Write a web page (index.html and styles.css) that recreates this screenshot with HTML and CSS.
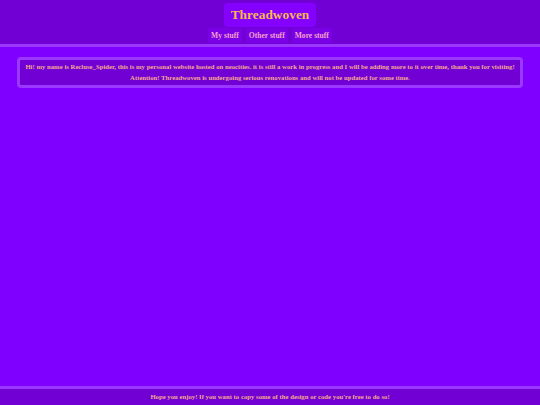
FILE: index.html
```html
<!DOCTYPE html>
<html>
<head>
<meta charset="utf-8">
<link rel="stylesheet" href="styles.css">
</head>
<body>
<header class="site-header">
  <div class="title">Threadwoven</div>
  <nav class="nav">
    <a class="nav-link" href="#">My stuff</a>
    <a class="nav-link" href="#">Other stuff</a>
    <a class="nav-link" href="#">More stuff</a>
  </nav>
</header>
<main class="main">
  <div class="notice">
    <p>Hi! my name is Recluse_Spider, this is my personal website hosted on neocities. it is still a work in progress and I will be adding more to it over time, thank you for visiting!</p>
    <p>Attention! Threadwoven is undergoing serious renovations and will not be updated for some time.</p>
  </div>
</main>
<footer class="site-footer">Hope you enjoy! If you want to copy some of the design or code you're free to do so!</footer>
</body>
</html>
```
FILE: styles.css
```css
html, body {
  margin: 0;
  padding: 0;
}
body {
  width: 540px;
  height: 405px;
  background: #8000ff;
  display: flex;
  flex-direction: column;
  font-family: "Liberation Serif", "Times New Roman", serif;
  font-weight: bold;
  overflow: hidden;
}
.site-header {
  background: #7000d4;
  border-bottom: 3px solid #9b38ff;
  display: flex;
  flex-direction: column;
  align-items: center;
  padding-top: 3px;
  padding-bottom: 1px;
}
.title {
  background: #8400ff;
  color: #f7b84e;
  font-size: 13.4px;
  line-height: 16px;
  padding: 4px 7px 4px;
  border-radius: 4px;
}
.nav {
  display: flex;
  gap: 4px;
  margin-top: 1px;
}
.nav-link {
  background: #7a00e6;
  color: #f4a2cc;
  text-decoration: none;
  font-size: 7.6px;
  line-height: 11px;
  padding: 2px 3px;
  border-radius: 2px;
}
.main {
  flex: 1;
  padding: 10px 17px;
}
.notice {
  background: #7000d4;
  border: 3px solid #9b38ff;
  border-radius: 4px;
  padding: 1px 1px 2px;
  color: #f6a890;
  font-size: 6.72px;
  line-height: 11px;
  text-align: center;
}
.notice p {
  margin: 0;
  white-space: nowrap;
}
.site-footer {
  background: #7000d4;
  border-top: 3px solid #9b38ff;
  color: #f6a890;
  font-size: 6.72px;
  line-height: 16px;
  text-align: center;
}
```
